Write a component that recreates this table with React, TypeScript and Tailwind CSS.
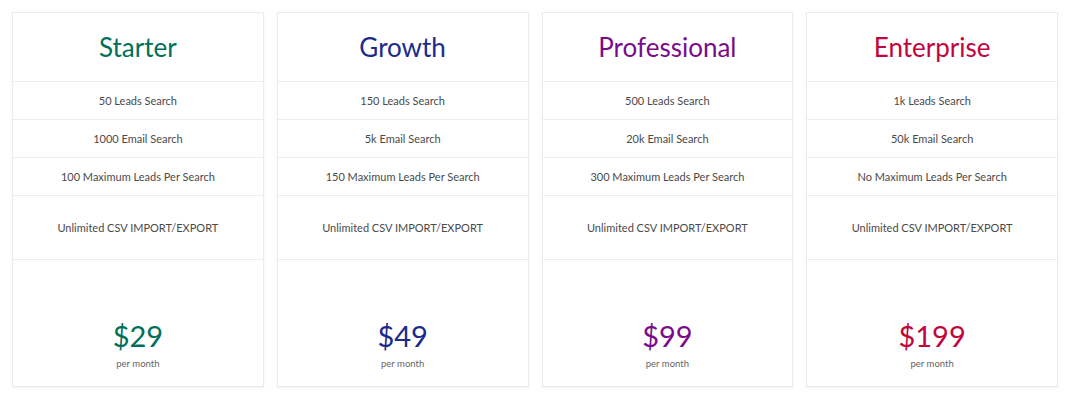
import React from "react";

const plans = [
  { name: "Starter", color: "text-[#00705a]", leads: "50 Leads Search", email: "1000 Email Search", max: "100 Maximum Leads Per Search", price: "$29" },
  { name: "Growth", color: "text-[#1b2a8c]", leads: "150 Leads Search", email: "5k Email Search", max: "150 Maximum Leads Per Search", price: "$49" },
  { name: "Professional", color: "text-[#7a0c8c]", leads: "500 Leads Search", email: "20k Email Search", max: "300 Maximum Leads Per Search", price: "$99" },
  { name: "Enterprise", color: "text-[#c2063d]", leads: "1k Leads Search", email: "50k Email Search", max: "No Maximum Leads Per Search", price: "$199" },
];

export default function App() {
  return (
    <div className="w-[1070px] h-[405px] bg-white px-[12px] pt-[12px] flex gap-[13px]" style={{ fontFamily: "Lato, 'Open Sans', sans-serif" }}>
      {plans.map((p) => (
        <div key={p.name} className="flex-1 h-[375px] border border-[#ebebeb] shadow-[0_1px_2px_rgba(0,0,0,0.06)] flex flex-col bg-white">
          <div className="h-[69px] flex items-center justify-center border-b border-[#ececec]">
            <span className={`text-[26px] leading-none ${p.color}`}>{p.name}</span>
          </div>
          <div className="h-[38px] flex items-center justify-center border-b border-[#ececec] text-[11px] text-[#4a4a4a] pt-[1px]">{p.leads}</div>
          <div className="h-[38px] flex items-center justify-center border-b border-[#ececec] text-[11px] text-[#4a4a4a] pt-[1px]">{p.email}</div>
          <div className="h-[38px] flex items-center justify-center border-b border-[#ececec] text-[11px] text-[#4a4a4a] pt-[1px]">{p.max}</div>
          <div className="h-[64px] flex items-center justify-center border-b border-[#ececec] text-[11px] text-[#4a4a4a] pt-[1px]">Unlimited CSV IMPORT/EXPORT</div>
          <div className="flex-1 flex flex-col items-center pt-[61px]">
            <span className={`text-[29px] leading-none ${p.color}`}>{p.price}</span>
            <span className="text-[9.5px] leading-[14px] text-[#666] mt-[7px]">per month</span>
          </div>
        </div>
      ))}
    </div>
  );
}
